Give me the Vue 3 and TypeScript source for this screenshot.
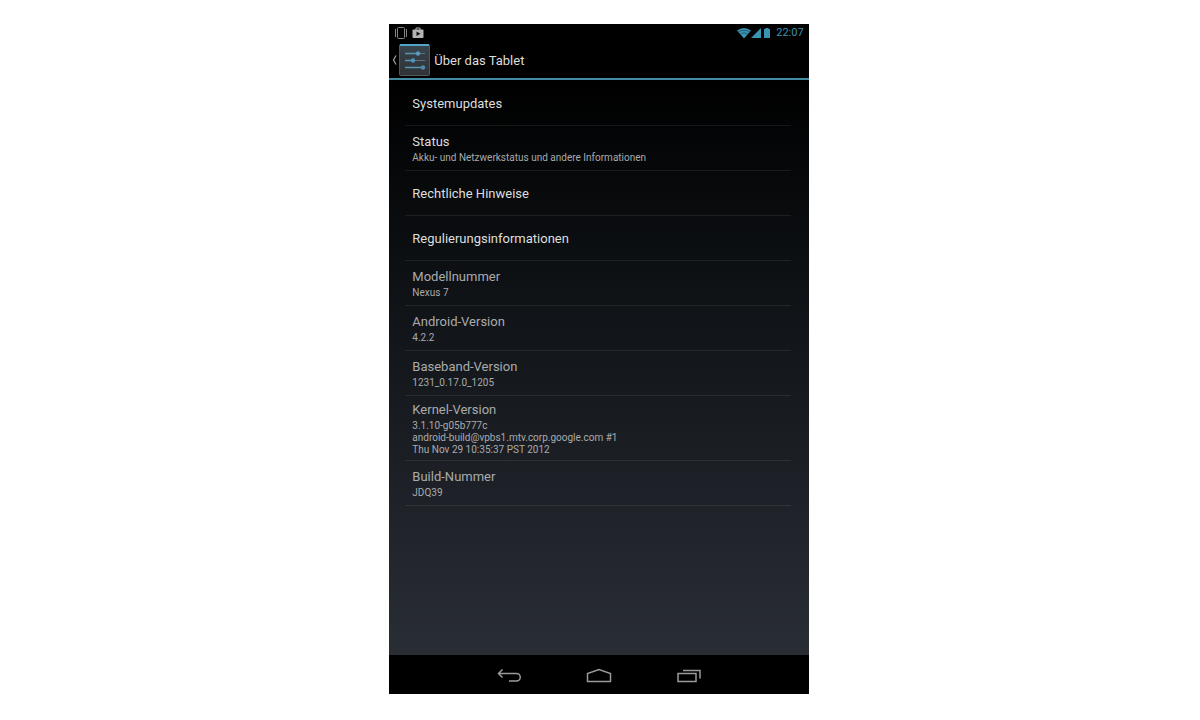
<script setup lang="ts">
interface Entry {
  title: string
  lines?: string[]
}

const actions: Entry[] = [
  { title: 'Systemupdates' },
  { title: 'Status', lines: ['Akku- und Netzwerkstatus und andere Informationen'] },
  { title: 'Rechtliche Hinweise' },
  { title: 'Regulierungsinformationen' },
]

const details: Entry[] = [
  { title: 'Modellnummer', lines: ['Nexus 7'] },
  { title: 'Android-Version', lines: ['4.2.2'] },
  { title: 'Baseband-Version', lines: ['1231_0.17.0_1205'] },
  {
    title: 'Kernel-Version',
    lines: [
      '3.1.10-g05b777c',
      'android-build@vpbs1.mtv.corp.google.com #1',
      'Thu Nov 29 10:35:37 PST 2012',
    ],
  },
  { title: 'Build-Nummer', lines: ['JDQ39'] },
]
</script>

<template>
  <div class="page">
    <div class="device">
      <div class="status-bar">
        <svg width="14" height="14" viewBox="0 0 14 14" fill="none" stroke="#858585">
          <rect x="3.5" y="1.5" width="7" height="11" rx="1" />
          <path d="M1.500 3v8M12.500 3v8" />
        </svg>
        <svg width="14" height="14" viewBox="0 0 14 14">
          <path d="M5 4V2h4v2" fill="none" stroke="#b4b4b4" />
          <rect x="1.500" y="3.500" width="11" height="8.500" rx="1" fill="#b4b4b4" />
          <path d="M5.500 5.500l4 2.300-4 2.300z" fill="#111" />
        </svg>
        <div class="signals">
          <svg width="14" height="12" viewBox="0 0 14 12">
            <path d="M0 3.500Q7-1.500 14 3.500L7 11.500z" fill="#3b93b2" />
            <path d="M1.500 5Q7 1.500 12.500 5M3.500 7Q7 4.500 10.500 7" fill="none" stroke="#0f3c4d" stroke-width=".6" />
          </svg>
          <svg width="10" height="12" viewBox="0 0 10 12">
            <path d="M10 1v10H0z" fill="#3b93b2" />
          </svg>
          <svg width="11" height="12" viewBox="0 0 11 12">
            <path d="M4.500 1h3v1H9v9H3V2h1.500z" fill="#3b93b2" />
          </svg>
          <time class="clock">22:07</time>
        </div>
      </div>

      <header class="action-bar">
        <button class="up" aria-label="Zurück zu den Einstellungen">
          <svg width="10" height="16" viewBox="0 0 10 16" fill="none" stroke="#999" stroke-width="1.300">
            <path d="M7 3.500L4.500 8 7 12.500" />
          </svg>
          <svg width="31" height="32" viewBox="0 0 31 32">
            <defs>
              <linearGradient id="tile" x1="0" y1="0" x2="0" y2="1">
                <stop offset="0" stop-color="#38454e" />
                <stop offset="1" stop-color="#303236" />
              </linearGradient>
            </defs>
            <rect x=".5" y=".5" width="30" height="31" rx="1" fill="url(#tile)" stroke="#4e575c" />
            <path d="M1 1h29" stroke="#4fa5c6" stroke-width="2" />
            <path d="M6 9.500h20M6 16.500h20M6 23.500h20" stroke="#666f75" />
            <path d="M6 9.500h12M6 16.500h7M6 23.500h17" stroke="#5796b2" stroke-width="1.300" />
            <circle cx="19" cy="9.500" r="2.200" fill="#5a9aba" />
            <circle cx="14" cy="16.500" r="2.200" fill="#4d94b8" />
            <circle cx="24" cy="23.500" r="2.200" fill="#5289aa" />
          </svg>
        </button>
        <h1>Über das Tablet</h1>
      </header>

      <main>
        <ul>
          <li v-for="entry in actions" :key="entry.title">
            <button class="row">
              <span class="title">{{ entry.title }}</span>
              <span v-if="entry.lines" class="lines">
                <span v-for="line in entry.lines" :key="line" class="line">{{ line }}</span>
              </span>
            </button>
          </li>
          <li v-for="entry in details" :key="entry.title" class="row info">
            <span class="title">{{ entry.title }}</span>
            <span class="lines">
              <span v-for="line in entry.lines" :key="line" class="line">{{ line }}</span>
            </span>
          </li>
        </ul>
      </main>

      <nav>
        <button aria-label="Zurück">
          <svg width="26" height="16" viewBox="0 0 26 16" fill="none" stroke="#9a9a9a" stroke-width="1.500">
            <path d="M6.500 1.500L2.500 5.500l4 4M3 5.500h17.500a3.750 3.750 0 0 1 0 7.500H13" />
          </svg>
        </button>
        <button aria-label="Startseite">
          <svg width="26" height="16" viewBox="0 0 26 16" fill="none" stroke="#9a9a9a" stroke-width="1.500">
            <path d="M1.500 13.500v-8L13 1.500l11.500 4v8z" />
          </svg>
        </button>
        <button aria-label="Letzte Apps">
          <svg width="26" height="16" viewBox="0 0 26 16" fill="none" stroke="#9a9a9a" stroke-width="1.500">
            <path d="M2 5.500h18v8H2zM7 2.500h17v8" />
          </svg>
        </button>
      </nav>
    </div>
  </div>
</template>

<style>
body {
  margin: 0;
  background: #fff;
}
</style>

<style scoped>
.page {
  box-sizing: border-box;
  min-height: 100vh;
  padding: 24px 2px 26px 0;
  display: flex;
  justify-content: center;
  font-family: Roboto, "Liberation Sans", sans-serif;
}

.device {
  width: 35%;
  min-width: 320px;
  display: flex;
  flex-direction: column;
  background: #000;
  color: #dedede;
}

button {
  border: 0;
  padding: 0;
  background: none;
  color: inherit;
  font: inherit;
  text-align: left;
  cursor: pointer;
}

svg {
  display: block;
}

.status-bar {
  height: 18px;
  padding: 0 5px;
  display: flex;
  align-items: center;
  gap: 3px;
}

.signals {
  margin-left: auto;
  display: flex;
  align-items: center;
}

.clock {
  margin-left: 4px;
  color: #3b93b2;
  font-size: 11px;
  line-height: 18px;
}

.action-bar {
  height: 36px;
  display: flex;
  align-items: center;
  gap: 4px;
  border-bottom: 2px solid #438ba5;
}

.up {
  display: flex;
  align-items: center;
}

h1 {
  margin: 0;
  padding-top: 2px;
  font-size: 13px;
  font-weight: 400;
  line-height: 18px;
}

main {
  flex: 1;
  padding: 1px 18px 0 16px;
  background: linear-gradient(#000, #0c0f12 30%, #1d2127 70%, #292e34);
}

ul {
  margin: 0;
  padding: 0;
  list-style: none;
}

li {
  border-bottom: 1px solid rgba(255, 255, 255, 0.08);
}

.row {
  box-sizing: border-box;
  width: 100%;
  min-height: 44px;
  padding: 5px 7px 4px;
  display: flex;
  flex-direction: column;
  justify-content: center;
}

.info {
  min-height: 45px;
  color: #a9abad;
}

.title {
  font-size: 13px;
  line-height: 18px;
}

.lines {
  padding-top: 1px;
  color: #a9abad;
  font-size: 10px;
  line-height: 12px;
}

.line {
  display: block;
}

nav {
  height: 39px;
  padding-top: 2px;
  box-sizing: border-box;
  display: flex;
  align-items: center;
  justify-content: center;
  gap: 64px;
}
</style>
